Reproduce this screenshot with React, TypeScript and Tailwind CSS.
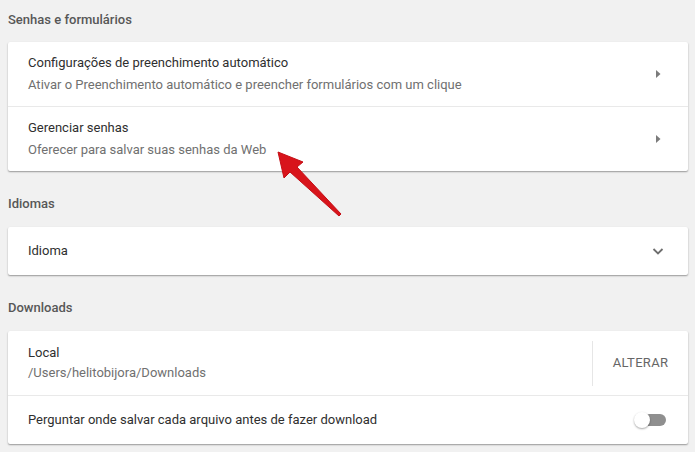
import { FC, ReactNode } from 'react';

const font = { fontFamily: 'Roboto, "Liberation Sans", sans-serif' };

const SectionTitle: FC<{ children: ReactNode; first?: boolean }> = ({ children, first }) => (
  <div
    className={`${first ? 'pt-[11px] pb-[13px]' : 'pt-[24px] pb-[14px]'} px-[8px] text-[13px] leading-[18px] font-medium text-[#575757]`}
  >
    {children}
  </div>
);

const Card: FC<{ children: ReactNode }> = ({ children }) => (
  <div className="mx-[8px] w-[680px] bg-white rounded-[2px] shadow-[0_1px_2px_rgba(0,0,0,0.28),0_1px_1px_rgba(0,0,0,0.12)]">
    {children}
  </div>
);

const ArrowRight = () => (
  <svg width="20" height="20" viewBox="0 0 20 20">
    <path d="M8 6 L12.5 10 L8 14 Z" fill="#7b7b7b" />
  </svg>
);

const ExpandMore = () => (
  <svg width="20" height="20" viewBox="0 0 20 20">
    <path d="M5.5 8 L10 12.5 L14.5 8" fill="none" stroke="#6e6e6e" strokeWidth="1.8" />
  </svg>
);

const LinkRow: FC<{ title: string; sub: string }> = ({ title, sub }) => (
  <div className="h-[64px] flex items-center pl-[20px] pr-[20px]">
    <div className="flex-1">
      <div className="text-[13px] leading-[22px] text-[#2f2f2f]">{title}</div>
      <div className="text-[13px] leading-[22px] text-[#707070]">{sub}</div>
    </div>
    <ArrowRight />
  </div>
);

export default function App() {
  return (
    <div className="relative w-[695px] h-[452px] bg-[#f1f1f1] overflow-hidden" style={font}>
      <SectionTitle first>Senhas e formulários</SectionTitle>
      <Card>
        <LinkRow
          title="Configurações de preenchimento automático"
          sub="Ativar o Preenchimento automático e preencher formulários com um clique"
        />
        <div className="h-px bg-[#e9e9e9]" />
        <LinkRow title="Gerenciar senhas" sub="Oferecer para salvar suas senhas da Web" />
      </Card>

      <SectionTitle>Idiomas</SectionTitle>
      <Card>
        <div className="h-[48px] flex items-center pl-[20px] pr-[20px]">
          <div className="flex-1 text-[13px] text-[#2f2f2f]">Idioma</div>
          <ExpandMore />
        </div>
      </Card>

      <SectionTitle>Downloads</SectionTitle>
      <Card>
        <div className="h-[64px] flex items-center pl-[20px]">
          <div className="flex-1">
            <div className="text-[13px] leading-[20px] text-[#2f2f2f]">Local</div>
            <div className="text-[13px] leading-[20px] text-[#707070]">/Users/helitobijora/Downloads</div>
          </div>
          <div className="w-px h-[45px] bg-[#e6e6e6]" />
          <div className="w-[95px] flex justify-center text-[13px] tracking-[0.3px] text-[#666666]">
            ALTERAR
          </div>
        </div>
        <div className="h-px bg-[#e9e9e9]" />
        <div className="h-[48px] flex items-center pl-[20px] pr-[22px]">
          <div className="flex-1 text-[13px] text-[#2f2f2f]">
            Perguntar onde salvar cada arquivo antes de fazer download
          </div>
          <div className="relative w-[32px] h-[16px] flex items-center">
            <div className="ml-[4px] w-[28px] h-[12px] rounded-full bg-[#8f8f8f]" />
            <div className="absolute left-0 top-0 w-[16px] h-[16px] rounded-full bg-white shadow-[0_1px_2px_rgba(0,0,0,0.35)]" />
          </div>
        </div>
      </Card>

      <svg className="absolute left-0 top-0 pointer-events-none" width="695" height="452">
        <path
          d="M278 152 L303 162 L297 167 L341 214 L339 216 L290 172 L284 178 Z"
          fill="#d8141b"
          stroke="#c40f16"
          strokeWidth="1"
          strokeLinejoin="round"
        />
      </svg>
    </div>
  );
}
